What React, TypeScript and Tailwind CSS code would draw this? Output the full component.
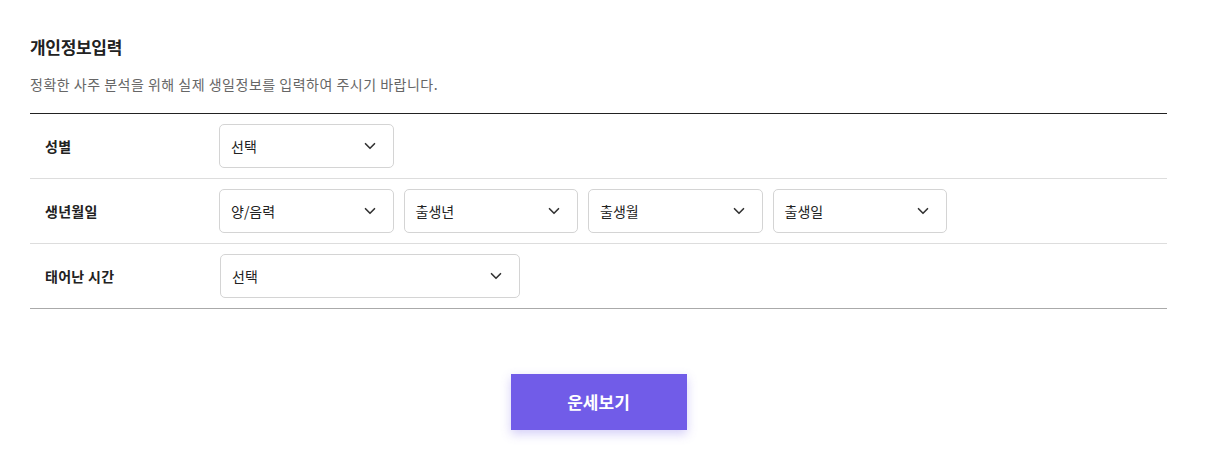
import { ChevronDown } from "lucide-react";

const FONT = { fontFamily: '"Noto Sans CJK KR", "Noto Sans", sans-serif' };

function SelectBox({ label, width }: { label: string; width: string }) {
  return (
    <div
      className={`flex h-[44px] items-center justify-between rounded-[5px] border border-[#d4d4d4] bg-white pl-[11px] pr-[14px] ${width}`}
    >
      <span className="text-[14px] text-[#222]">{label}</span>
      <ChevronDown className="h-[18px] w-[18px] text-[#333]" strokeWidth={2.2} />
    </div>
  );
}

function Row({
  label,
  children,
  last,
}: {
  label: string;
  children: React.ReactNode;
  last?: boolean;
}) {
  return (
    <div
      className={`flex h-[65px] items-center border-b ${last ? "border-[#aaaaaa]" : "border-[#dddddd]"}`}
    >
      <div className="w-[189px] pl-[15px] text-[14px] font-bold tracking-[0.3px] text-[#222]">
        {label}
      </div>
      <div className="flex gap-[10px]">{children}</div>
    </div>
  );
}

export default function App() {
  return (
    <div className="min-h-screen bg-white px-[30px] pt-[34px]" style={FONT}>
      <div className="w-[1137px]">
        <h2 className="text-[17px] font-bold leading-[26px] tracking-[-0.3px] text-[#222]">
          개인정보입력
        </h2>
        <p className="mt-[14px] text-[14px] leading-[20px] tracking-[0.5px] text-[#666]">
          정확한 사주 분석을 위해 실제 생일정보를 입력하여 주시기 바랍니다.
        </p>
        <div className="mt-[19px] border-t border-[#222]">
          <Row label="성별">
            <SelectBox label="선택" width="w-[174.5px]" />
          </Row>
          <Row label="생년월일">
            <SelectBox label="양/음력" width="w-[174.5px]" />
            <SelectBox label="출생년" width="w-[174.5px]" />
            <SelectBox label="출생월" width="w-[174.5px]" />
            <SelectBox label="출생일" width="w-[174.5px]" />
          </Row>
          <Row label="태어난 시간" last>
            <div className="pl-[1px]">
              <SelectBox label="선택" width="w-[300px]" />
            </div>
          </Row>
        </div>
        <div className="mt-[65px] flex justify-center">
          <button
            type="button"
            className="h-[56px] w-[176px] bg-[#715ce8] text-[17px] font-bold text-white shadow-[0_4px_10px_rgba(113,92,232,0.3)]"
          >
            운세보기
          </button>
        </div>
      </div>
    </div>
  );
}
